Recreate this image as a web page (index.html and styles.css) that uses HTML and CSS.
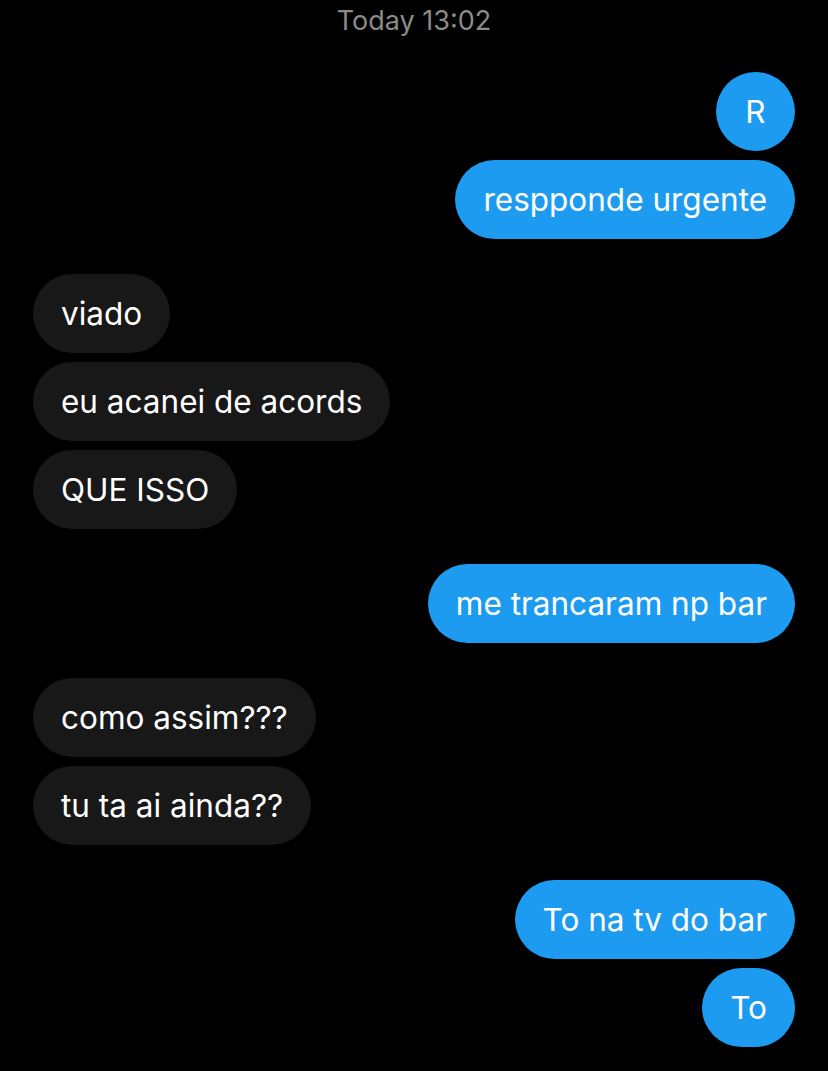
FILE: index.html
```html
<!DOCTYPE html>
<html lang="pt">
<head>
  <meta charset="UTF-8">
  <meta name="viewport" content="width=device-width, initial-scale=1.0">
  <title>Conversa</title>
  <link rel="stylesheet" href="styles.css">
</head>
<body>
  <div class="chat">
    <p class="stamp">Today 13:02</p>

    <div class="group sent">
      <span class="bubble single">R</span>
      <span class="bubble">respponde urgente</span>
    </div>

    <div class="group received">
      <span class="bubble">viado</span>
      <span class="bubble">eu acanei de acords</span>
      <span class="bubble">QUE ISSO</span>
    </div>

    <div class="group sent">
      <span class="bubble">me trancaram np bar</span>
    </div>

    <div class="group received">
      <span class="bubble">como assim???</span>
      <span class="bubble">tu ta ai ainda??</span>
    </div>

    <div class="group sent">
      <span class="bubble">To na tv do bar</span>
      <span class="bubble">To</span>
    </div>
  </div>
</body>
</html>
```

FILE: styles.css
```css
html {
  --bg: #000;
  --blue: #1d9bf0;
  --grey: #181818;
  --muted: #8b8b8b;
}

html, body {
  margin: 0;
  padding: 0;
  background: var(--bg);
}

body {
  font-family: "Inter", "Roboto", sans-serif;
  color: #fff;
}

.chat {
  display: flex;
  flex-direction: column;
  gap: 35px;
  padding: 0 33px;
}

.stamp {
  margin: 0;
  padding-top: 5px;
  height: 32px;
  text-align: center;
  font-size: 27px;
  line-height: 32px;
  color: var(--muted);
}

.group {
  display: flex;
  flex-direction: column;
  gap: 9px;
}

.sent {
  align-items: flex-end;
}

.received {
  align-items: flex-start;
}

.bubble {
  box-sizing: border-box;
  min-width: 79px;
  padding: 21px 28px;
  border-radius: 40px;
  font-size: 31.5px;
  line-height: 37px;
  text-align: center;
}

.sent .bubble {
  background: var(--blue);
}

.received .bubble {
  background: var(--grey);
}
```
